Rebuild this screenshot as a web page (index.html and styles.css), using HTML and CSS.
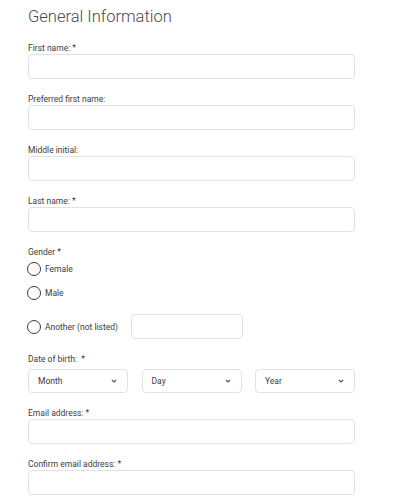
FILE: index.html
```html
<!DOCTYPE html>
<html lang="en">
<head>
<meta charset="utf-8">
<title>General Information</title>
<link rel="stylesheet" href="styles.css">
</head>
<body>
<main class="form">
  <h1 class="title">General Information</h1>

  <div class="field">
    <label class="label">First name: *</label>
    <div class="input"></div>
  </div>
  <div class="field">
    <label class="label">Preferred first name:</label>
    <div class="input"></div>
  </div>
  <div class="field">
    <label class="label">Middle initial:</label>
    <div class="input"></div>
  </div>
  <div class="field">
    <label class="label">Last name: *</label>
    <div class="input"></div>
  </div>

  <div class="field gender">
    <div class="label">Gender *</div>
    <div class="radio-row r-female"><span class="radio"></span><span class="radio-text">Female</span></div>
    <div class="radio-row r-male"><span class="radio"></span><span class="radio-text">Male</span></div>
    <div class="radio-row r-other"><span class="radio"></span><span class="radio-text">Another (not listed)</span><div class="input other-input"></div></div>
  </div>

  <div class="field dob">
    <div class="label">Date of birth:&nbsp; *</div>
    <div class="selects">
      <div class="select"><span>Month</span><svg class="chev" width="6" height="4" viewBox="0 0 6 4"><polyline points="0.8,0.8 3,3 5.2,0.8" fill="none" stroke="#555" stroke-width="1.2"/></svg></div>
      <div class="select"><span>Day</span><svg class="chev" width="6" height="4" viewBox="0 0 6 4"><polyline points="0.8,0.8 3,3 5.2,0.8" fill="none" stroke="#555" stroke-width="1.2"/></svg></div>
      <div class="select"><span>Year</span><svg class="chev" width="6" height="4" viewBox="0 0 6 4"><polyline points="0.8,0.8 3,3 5.2,0.8" fill="none" stroke="#555" stroke-width="1.2"/></svg></div>
    </div>
  </div>

  <div class="field">
    <label class="label">Email address: *</label>
    <div class="input"></div>
  </div>
  <div class="field">
    <label class="label">Confirm email address: *</label>
    <div class="input"></div>
  </div>
</main>
</body>
</html>
```
FILE: styles.css
```css
html, body {
  margin: 0;
  padding: 0;
  background: #ffffff;
}
body {
  font-family: Roboto, "Liberation Sans", sans-serif;
  color: #3d3d3d;
}
.form {
  width: 327px;
  padding: 0 0 0 28px;
  display: flex;
  flex-direction: column;
}
.title {
  margin: 6px 0 0 0;
  height: 36px;
  font-size: 16.5px;
  line-height: 22px;
  font-weight: 300;
  color: #4a4a4a;
}
.field {
  display: flex;
  flex-direction: column;
  margin-bottom: 14px;
}
.label {
  font-size: 8.5px;
  line-height: 12px;
  height: 12px;
  color: #3d3d3d;
}
.input {
  height: 25px;
  box-sizing: border-box;
  border: 1px solid #e2e2e2;
  border-radius: 4px;
  background: #fff;
}
.radio-row {
  display: flex;
  align-items: center;
  font-size: 8.5px;
  color: #3d3d3d;
}
.r-female { height: 22px; margin-top: 0; }
.r-male { height: 22px; margin-top: 2px; }
.r-other { height: 25px; margin-top: 10px; }
.radio {
  width: 14px;
  height: 14px;
  box-sizing: border-box;
  border: 1.2px solid #3a3a3a;
  border-radius: 50%;
  margin-left: -1px;
  margin-right: 4px;
  flex: none;
}
.other-input {
  width: 112px;
  margin-left: 13px;
}
.dob .label { margin-bottom: 4px; }
.selects {
  display: flex;
  justify-content: space-between;
}
.select {
  width: 100px;
  height: 24px;
  box-sizing: border-box;
  border: 1px solid #e2e2e2;
  border-radius: 4px;
  display: flex;
  align-items: center;
  justify-content: space-between;
  padding: 0 10px 0 9px;
  font-size: 8.5px;
  color: #3d3d3d;
}
.chev { display: block; }
```
